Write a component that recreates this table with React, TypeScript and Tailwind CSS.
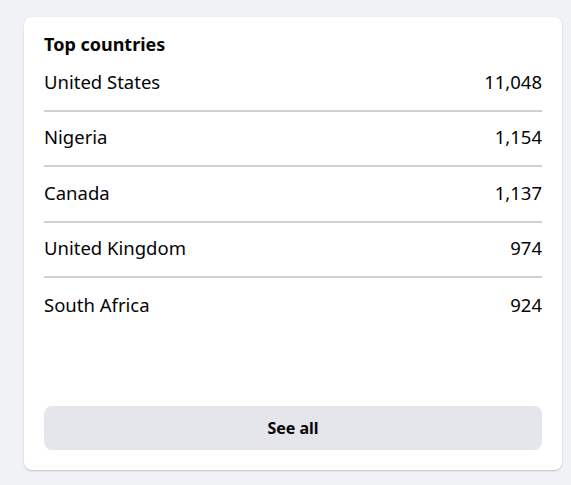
import React from 'react';

const countries = [
  { name: 'United States', count: '11,048' },
  { name: 'Nigeria', count: '1,154' },
  { name: 'Canada', count: '1,137' },
  { name: 'United Kingdom', count: '974' },
  { name: 'South Africa', count: '924' },
];

export default function App() {
  return (
    <div className="min-h-screen bg-[#f0f2f5] pl-[24px] pt-[17px] font-['Noto_Sans','Open_Sans',sans-serif] text-[#050505]">
      {/* Card */}
      <div className="flex h-[453px] w-[538px] flex-col rounded-[8px] bg-white px-5 pb-5 pt-[16px] shadow-[0_1px_2px_rgba(0,0,0,0.2)]">
        <h2 className="text-[18px] font-bold leading-[22px]">Top countries</h2>

        <ul className="mt-[1px]">
          {countries.map((c, i) => (
            <li
              key={c.name}
              className={`flex h-[55.5px] items-center justify-between pb-[2px] text-[18.5px] leading-[24px] ${
                i < countries.length - 1 ? 'border-b-2 border-[#ced0d4]' : ''
              }`}
            >
              <span>{c.name}</span>
              <span>{c.count}</span>
            </li>
          ))}
        </ul>

        <button
          type="button"
          className="mt-auto h-[44px] w-full rounded-[8px] bg-[#e4e6eb] text-[16px] font-bold text-[#050505]"
        >
          See all
        </button>
      </div>
    </div>
  );
}
